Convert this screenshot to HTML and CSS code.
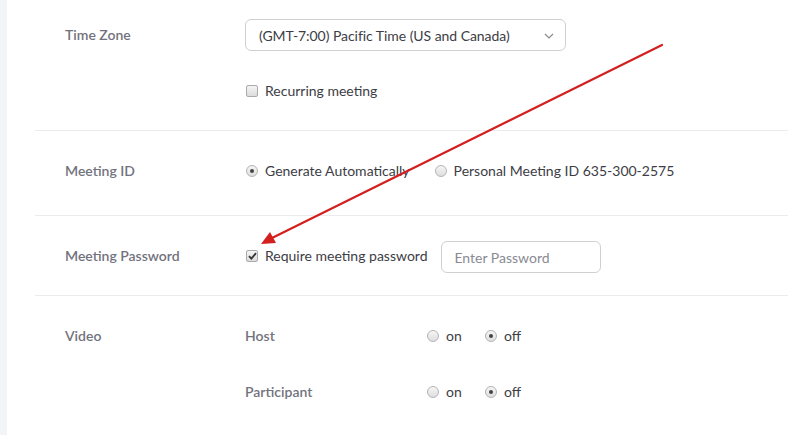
FILE: index.html
```html
<!DOCTYPE html>
<html>
<head>
<meta charset="utf-8">
<link rel="stylesheet" href="styles.css">
</head>
<body>
<div class="page">
  <div class="stripe"></div>
  <div class="content">
    <div class="section s1">
      <div class="label tz">Time Zone</div>
      <div class="value col">
        <div class="select">
          <span>(GMT-7:00) Pacific Time (US and Canada)</span>
          <svg class="chev" width="10" height="6" viewBox="0 0 10 6"><path d="M1 1 L5 5 L9 1" fill="none" stroke="#8a8a8a" stroke-width="1.2"/></svg>
        </div>
        <label class="opt"><span class="cb"></span>Recurring meeting</label>
      </div>
    </div>
    <div class="section s2">
      <div class="label">Meeting ID</div>
      <div class="value row">
        <label class="opt"><span class="rb on"></span>Generate Automatically</label>
        <label class="opt pmi"><span class="rb"></span>Personal Meeting ID 635-300-2575</label>
      </div>
    </div>
    <div class="section s3">
      <div class="label">Meeting Password</div>
      <div class="value row">
        <label class="opt"><span class="cb checked"><svg width="9" height="8" viewBox="0 0 9 8"><path d="M1 4.2 L3.4 6.6 L8 1.2" fill="none" stroke="#333" stroke-width="1.8"/></svg></span>Require meeting password</label>
        <div class="input">Enter Password</div>
      </div>
    </div>
    <div class="section s4">
      <div class="label">Video</div>
      <div class="value col vid">
        <div class="subrow">
          <div class="sublabel">Host</div>
          <label class="opt onopt"><span class="rb"></span>on</label>
          <label class="opt"><span class="rb on"></span>off</label>
        </div>
        <div class="subrow">
          <div class="sublabel">Participant</div>
          <label class="opt onopt"><span class="rb"></span>on</label>
          <label class="opt"><span class="rb on"></span>off</label>
        </div>
      </div>
    </div>
  </div>
  <svg class="arrow" width="788" height="435" viewBox="0 0 788 435">
    <line x1="662" y1="45" x2="272" y2="238" stroke="#d41f1f" stroke-width="2.2" stroke-linecap="round"/>
    <polygon points="261,244 270,232 276,243" fill="#d41f1f"/>
  </svg>
</div>
</body>
</html>
```
FILE: styles.css
```css
html, body {
  margin: 0;
  padding: 0;
  background: #ffffff;
}
body {
  font-family: Lato, "Open Sans", sans-serif;
  font-size: 14px;
  color: #3d3d45;
}
.page {
  position: relative;
  width: 788px;
  height: 435px;
  display: flex;
  overflow: hidden;
}
.stripe {
  width: 7px;
  background: #f3f4f8;
  flex: none;
}
.content {
  flex: 1;
  margin-left: 28px;
}
.section {
  display: flex;
  border-bottom: 1px solid #ececef;
}
.s1 { padding: 19px 0 29px; }
.s2 { padding: 30px 0 34px; align-items: center; }
.s3 { padding: 25px 0 22px; align-items: center; }
.s4 { padding: 30px 0 0; border-bottom: none; }
.label {
  width: 180px;
  padding-left: 30px;
  flex: none;
  color: #72727d;
  font-weight: 600;
  line-height: 20px;
}
.s3 .label { margin-top: -2px; }
.tz { line-height: 32px; }
.value.col {
  display: flex;
  flex-direction: column;
  align-items: flex-start;
}
.value.row {
  display: flex;
  align-items: center;
}
.select {
  box-sizing: border-box;
  width: 321px;
  height: 32px;
  border: 1px solid #cfcfd4;
  border-radius: 6px;
  display: flex;
  align-items: center;
  justify-content: space-between;
  padding: 0 11px 0 13px;
  color: #3d3d45;
  letter-spacing: -0.05px;
}
.chev { margin-top: 1px; }
.opt {
  display: flex;
  align-items: center;
  line-height: 20px;
  color: #3d3d45;
}
.s1 .opt { margin-top: 30px; }
.s3 .opt { margin-top: -2px; }
.cb {
  box-sizing: border-box;
  width: 12px;
  height: 12px;
  border: 1px solid #a9a9ae;
  border-radius: 2px;
  background: linear-gradient(#f4f4f4, #dcdcdc);
  margin: 0 7px 0 1px;
  display: flex;
  align-items: center;
  justify-content: center;
}
.cb svg { display: block; }
.rb {
  box-sizing: border-box;
  width: 12px;
  height: 12px;
  border: 1px solid #b4b4b8;
  border-radius: 50%;
  background: linear-gradient(#f6f6f6, #dedede);
  margin: 0 7px 0 1px;
  display: flex;
  align-items: center;
  justify-content: center;
}
.rb.on::after {
  content: "";
  width: 4px;
  height: 4px;
  border-radius: 50%;
  background: #444;
}
.pmi { margin-left: 24px; }
.input {
  box-sizing: border-box;
  width: 160px;
  height: 32px;
  margin-left: 14px;
  border: 1px solid #cfcfd4;
  border-radius: 6px;
  padding: 0 12px;
  display: flex;
  align-items: center;
  color: #8a8a92;
}
.vid { gap: 36px; }
.subrow {
  display: flex;
  align-items: center;
  line-height: 20px;
}
.sublabel {
  width: 181px;
  color: #72727d;
  font-weight: 600;
}
.onopt { width: 58px; }
.arrow {
  position: absolute;
  left: 0;
  top: 0;
  pointer-events: none;
}
```
